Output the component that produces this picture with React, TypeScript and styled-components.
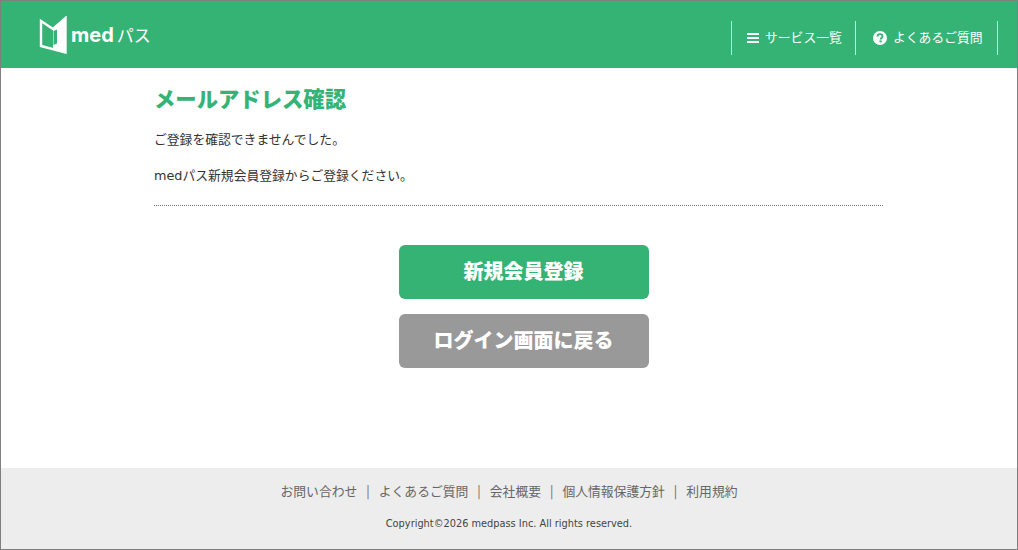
import React from "react";
import styled, { createGlobalStyle } from "styled-components";

const GlobalStyle = createGlobalStyle`
    html, body {
        margin: 0;
        padding: 0;
        background: #fff;
    }
    * {
        box-sizing: border-box;
    }
`;

const fontStack = `"DejaVu Sans", "Noto Sans CJK JP", sans-serif`;
const cjkStack = `"Noto Sans CJK JP", sans-serif`;

const links = ["お問い合わせ", "よくあるご質問", "会社概要", "個人情報保護方針", "利用規約"];

const LogoMark = () => (
    <svg width="28" height="38" viewBox="0 0 28 38" fill="none">
        <path d="M2 5 L14 13 L26.5 2 V36.5 L2 30 Z" stroke="#fff" strokeWidth="2.4" />
        <path d="M14 13 L26.5 2 V36.5 L14 33.2 Z" fill="#fff" />
        <path d="M14.5 15 L18 13.5 V27.5 L14.5 29 Z" fill="#35b374" />
    </svg>
);

const MenuIcon = () => (
    <svg width="12" height="10" viewBox="0 0 12 10">
        <rect width="12" height="2" fill="#fff" />
        <rect y="4" width="12" height="2" fill="#fff" />
        <rect y="8" width="12" height="2" fill="#fff" />
    </svg>
);

const HelpIcon = () => (
    <svg width="14" height="14" viewBox="0 0 14 14">
        <circle cx="7" cy="7" r="7" fill="#fff" />
        <path d="M4.6 5.4 C4.6 4 5.7 3.1 7 3.1 C8.4 3.1 9.5 4 9.5 5.3 C9.5 6.9 7.6 6.9 7.6 8.4" stroke="#35b374" strokeWidth="1.9" fill="none" />
        <rect x="6.5" y="9.4" width="2.2" height="2" fill="#35b374" />
    </svg>
);

export default function App() {
    return (
        <>
            <GlobalStyle />
            <Page>
                <Header>
                    <Logo>
                        <LogoMark />
                        <LogoMed>med</LogoMed>
                        <LogoPass>パス</LogoPass>
                    </Logo>
                    <Nav>
                        <NavItem $width={124} $pad={15}>
                            <MenuIcon />
                            <NavLabel>サービス一覧</NavLabel>
                        </NavItem>
                        <NavItem $width={142} $pad={17}>
                            <HelpIcon />
                            <NavLabel>よくあるご質問</NavLabel>
                        </NavItem>
                    </Nav>
                </Header>
                <Main>
                    <Title>メールアドレス確認</Title>
                    <Message>ご登録を確認できませんでした。</Message>
                    <Message>medパス新規会員登録からご登録ください。</Message>
                    <Divider />
                    <Actions>
                        <ActionButton $color="#35b374">新規会員登録</ActionButton>
                        <ActionButton $color="#999999">ログイン画面に戻る</ActionButton>
                    </Actions>
                </Main>
                <Footer>
                    <FooterLinks>
                        {links.map((link, index) => (
                            <FooterLink key={index}>{link}</FooterLink>
                        ))}
                    </FooterLinks>
                    <Copyright>Copyright©2026 medpass Inc. All rights reserved.</Copyright>
                </Footer>
            </Page>
        </>
    );
}

const Page = styled.div`
    width: 1018px;
    height: 550px;
    border: 1px solid #7f7f7f;
    display: flex;
    flex-direction: column;
    font-family: ${fontStack};
    color: #333;
    overflow: hidden;
`;

const Header = styled.header`
    height: 67px;
    background: #35b374;
    display: flex;
    align-items: center;
    justify-content: space-between;
    padding: 0 19px 0 38px;
    flex-shrink: 0;
`;

const Logo = styled.div`
    display: flex;
    align-items: center;
    color: #fff;
`;

const LogoMed = styled.span`
    font-family: "Inter", sans-serif;
    font-size: 20px;
    font-weight: 700;
    margin-left: 4px;
`;

const LogoPass = styled.span`
    font-family: ${cjkStack};
    font-size: 17px;
    margin-left: 3px;
`;

const Nav = styled.nav`
    display: flex;
    margin-top: 7px;
    border-right: 1px solid rgba(255, 255, 255, 0.75);
`;

const NavItem = styled.a<{ $width: number; $pad: number }>`
    width: ${(p) => p.$width}px;
    height: 34px;
    padding-left: ${(p) => p.$pad}px;
    border-left: 1px solid rgba(255, 255, 255, 0.75);
    display: flex;
    align-items: center;
    gap: 6px;
    color: #fff;
    font-family: ${cjkStack};
    font-size: 12.8px;
`;

const NavLabel = styled.span`
    padding-bottom: 4px;
`;

const Main = styled.main`
    flex: 1;
    width: 729px;
    margin-left: 153px;
    display: flex;
    flex-direction: column;
`;

const Title = styled.h1`
    margin: 16px 0 3px;
    font-family: ${cjkStack};
    font-size: 21.33px;
    line-height: 28px;
    font-weight: 900;
    color: #35b374;
`;

const Message = styled.p`
    margin: 14px 0 0;
    font-size: 12.8px;
    line-height: 22px;
    color: #333;
`;

const Divider = styled.hr`
    width: 100%;
    margin: 18px 0 0;
    border: 0;
    border-top: 1px dotted #777;
`;

const Actions = styled.div`
    display: flex;
    flex-direction: column;
    align-items: center;
    gap: 15px;
    margin: 39px 0 0 10px;
`;

const ActionButton = styled.a<{ $color: string }>`
    width: 250px;
    height: 54px;
    padding-bottom: 4px;
    border-radius: 6px;
    background: ${(p) => p.$color};
    color: #fff;
    font-family: ${cjkStack};
    font-size: 20px;
    font-weight: 900;
    display: flex;
    align-items: center;
    justify-content: center;
`;

const Footer = styled.footer`
    height: 81px;
    background: #ededed;
    flex-shrink: 0;
    display: flex;
    flex-direction: column;
    align-items: center;
    padding-top: 13px;
`;

const FooterLinks = styled.div`
    display: flex;
    font-family: ${cjkStack};
    font-size: 12.8px;
    line-height: 20px;
    color: #666;
`;

const FooterLink = styled.a`
    & + &::before {
        content: "|";
        margin: 0 9px;
    }
`;

const Copyright = styled.small`
    margin-top: 15px;
    font-size: 9.8px;
    line-height: 16px;
    color: #444;
`;
